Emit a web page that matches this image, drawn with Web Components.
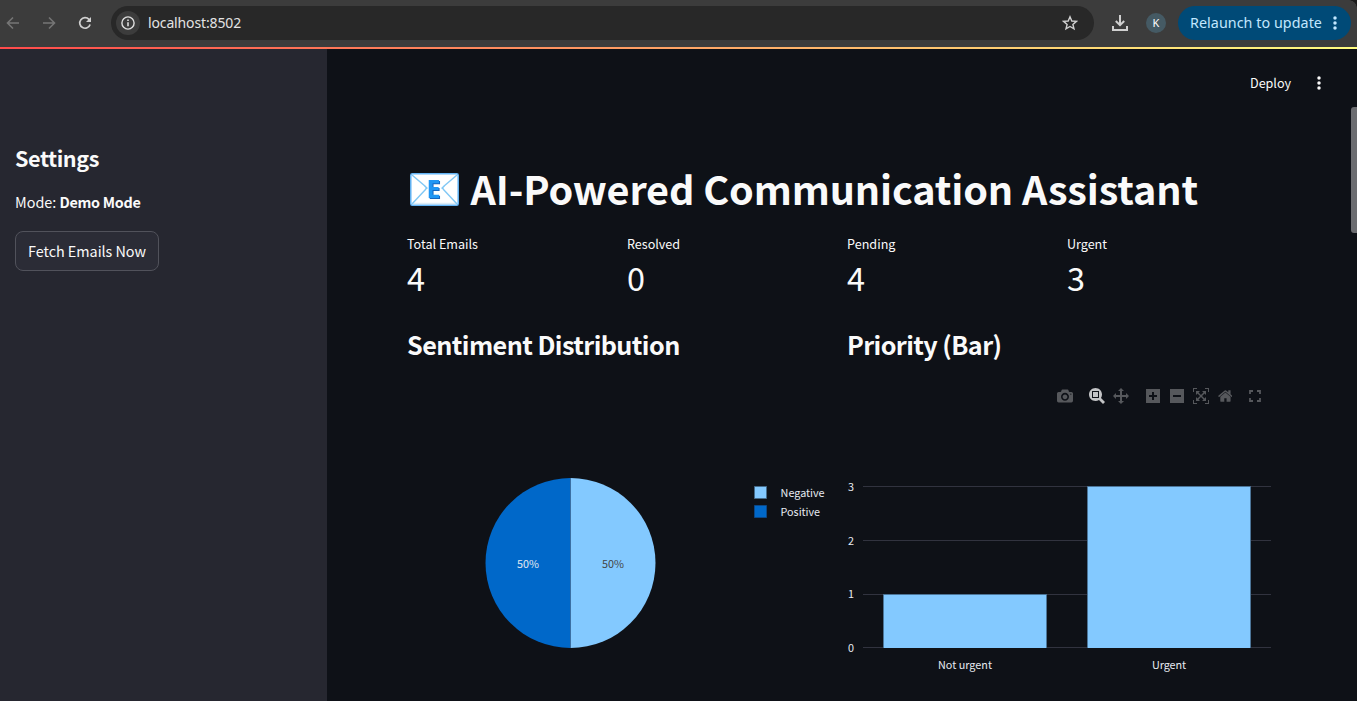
<!DOCTYPE html>
<html lang="en">
<head>
<meta charset="utf-8">
<title>AI-Powered Communication Assistant</title>
<style>
html,body{margin:0;height:100%;overflow:hidden;background:#0e1117}
body{font-family:"Noto Sans CJK SC","Noto Sans",sans-serif;color:#fafafa}
</style>
</head>
<body>
<mail-dashboard></mail-dashboard>
<script>
const define = (name, markup, setup) => customElements.define(name, class extends HTMLElement {
  connectedCallback() {
    if (this.shadowRoot) return;
    const t = document.createElement('template');
    t.innerHTML = typeof markup === 'function' ? markup(this) : markup;
    this.attachShadow({mode: 'open'}).append(t.content.cloneNode(true));
    if (setup) setup(this);
  }
});

/* Text run whose tracking is adjusted to a given advance width */
define('fit-text', `<style>:host{display:inline-block;white-space:pre}</style><span><slot></slot></span>`, el => {
  const w = +el.getAttribute('width');
  const n = el.textContent.length;
  const natural = el.shadowRoot.querySelector('span').getBoundingClientRect().width;
  el.style.letterSpacing = ((w - natural) / n).toFixed(3) + 'px';
});

const dots = (c, s) => `<svg width="6" height="16" viewBox="0 0 6 16" fill="${c}"><circle cx="3" cy="${8 - s}" r="1.75"/><circle cx="3" cy="8" r="1.75"/><circle cx="3" cy="${8 + s}" r="1.75"/></svg>`;

define('browser-bar', `<style>
:host{display:flex;align-items:center;box-sizing:border-box;height:47px;padding:0 6px 1px 0;background:#3c3c3c;font-family:"Noto Sans",sans-serif;color:#e3e3e3}
svg{display:block;flex:none}
fit-text{padding-bottom:2px}
.nav{display:flex;gap:20px;width:111px;padding-left:5px;box-sizing:border-box}
.url{flex:none;width:983px;height:34px;border-radius:17px;background:#282828;display:flex;align-items:center;box-sizing:border-box;padding:0 16px 0 5px;font-size:14px}
.info{width:24px;height:24px;border-radius:50%;background:#3c3c3c;display:grid;place-items:center;margin-right:8px}
.star{margin-left:auto}
.tail{display:flex;align-items:center;margin-left:auto}
.av{box-sizing:border-box;width:20px;height:20px;border-radius:50%;background:#455a64;color:#fff;font-size:11px;line-height:20px;text-align:center;margin:0 12px 0 18px}
.upd{display:flex;align-items:center;box-sizing:border-box;width:173px;height:34px;border-radius:17px;background:#004a77;color:#c2e7ff;font-size:14.3px;padding-left:12px;gap:10px}
</style>
<div class="nav">
<svg width="16" height="16" fill="none" stroke="#757575" stroke-width="1.6"><path d="M14 8H3M8 2.5 2.5 8 8 13.500"/></svg>
<svg width="16" height="16" fill="none" stroke="#757575" stroke-width="1.6"><path d="M2 8h11M8 2.500 13.500 8 8 13.500"/></svg>
<svg width="16" height="16" fill="none" stroke="#d0d0d0" stroke-width="1.7"><path d="M13.100 9.500A5.300 5.300 0 1 1 12 4.400L13 5.500"/><path d="M14 2v5H9z" fill="#d0d0d0" stroke="none"/></svg>
</div>
<div class="url"><span class="info"><svg width="14" height="14" fill="none" stroke="#dedede" stroke-width="1.4"><circle cx="7" cy="7" r="6.100"/><path d="M7 6.200v4M7 3.600v1.500" stroke-width="1.600"/></svg></span><fit-text width="93">localhost:8502</fit-text>
<svg class="star" width="16" height="16" viewBox="0 0 16 16" fill="none" stroke="#d0d0d0" stroke-width="1.400"><path d="m8 1.800 1.800 4.200 4.600.4-3.500 3 1.100 4.500L8 11.500l-4 2.400 1.100-4.500-3.500-3 4.600-.4z"/></svg></div>
<div class="tail"><svg width="16" height="18" fill="none" stroke="#d0d0d0" stroke-width="2"><path d="M8 1v10M3.800 7 8 11.200 12.200 7M1 12v4h14v-4"/></svg><span class="av">K</span>
<div class="upd"><fit-text width="132">Relaunch to update</fit-text>${dots('#c2e7ff', 5)}</div></div>`);

define('app-sidebar', `<style>
:host{display:block;box-sizing:border-box;width:327px;height:100%;background:#262730;padding:91px 15px 0}
h2{margin:0;font-size:21.6px;font-weight:600;line-height:36px;height:36px}
p{margin:15px 0 0;font-size:14.4px;line-height:22px;height:22px}
button{display:flex;align-items:center;justify-content:center;margin:18px 0 0;width:144px;height:40px;box-sizing:border-box;padding:0 0 1px;border:1px solid #51525b;border-radius:8px;background:#2b2c36;color:#fafafa;font:14.4px "Noto Sans CJK SC",sans-serif}
</style>
<h2><fit-text width="84">Settings</fit-text></h2>
<p><fit-text width="44.500">Mode: </fit-text><fit-text width="81" style="font-weight:600">Demo Mode</fit-text></p>
<button><fit-text width="118">Fetch Emails Now</fit-text></button>`);

define('app-header', `<style>
:host{display:flex;justify-content:flex-end;align-items:center;box-sizing:border-box;height:60px;padding:8px 35px 0 0;gap:25px;font-size:12.6px;line-height:20px}
svg{display:block}</style>
<fit-text width="41">Deploy</fit-text>${dots('#fafafa', 5)}`);

define('metric-card', el => `<style>
:host{display:block}
.l{font-size:12.6px;line-height:20px;height:20px}
.v{font-size:32.4px;line-height:46px;height:46px}</style>
<div class="l"><fit-text width="${el.getAttribute('w')}">${el.getAttribute('label')}</fit-text></div>
<div class="v"><slot></slot></div>`);

define('email-emoji', `<style>:host{display:block;width:49px;height:33px}svg{display:block}
text{font:700 25px "Noto Sans",sans-serif;fill:#2196f3;filter:drop-shadow(1px 1px 0 #1565c0)}</style>
<svg width="49" height="33"><rect x=".8" y=".8" width="47.400" height="31.400" rx="1.500" fill="#fff" stroke="#64b5f6" stroke-width="1.500"/>
<path d="M2.500 30.300h44" stroke="#d5e8f5"/>
<path d="M2 2 15.500 13.500Q17 15 15.500 16.500L2 31M47 2 33.500 13.500Q32 15 33.500 16.500L47 31M14.500 13l3 2.500M34.500 13l-3 2.500" fill="none" stroke="#81c8f5" stroke-width="1.400"/>
<text x="16.500" y="24.500">E</text></svg>`);

define('mode-bar', () => {
  const icon = (d, w = 1000, c = '') => `<i class="${c}"><svg width="${16 * w / 1000}" height="16" viewBox="0 0 ${w} 1000"><path transform="matrix(1 0 0 -1 0 850)" d="${d}"/></svg></i>`;
  return `<style>:host{display:flex;justify-content:flex-end;padding-right:4px;height:24px}
i{width:24px;height:24px;display:grid;place-items:center;fill:#56585c}.g{margin-left:8px}.on{fill:#c3c4c6}.f{margin-left:6px}svg{display:block}</style>`
  + icon('m500 450c-83 0-150-67-150-150 0-83 67-150 150-150 83 0 150 67 150 150 0 83-67 150-150 150z m400 150h-120c-16 0-34 13-39 29l-31 93c-6 15-23 28-40 28h-340c-16 0-34-13-39-28l-31-94c-6-15-23-28-40-28h-120c-55 0-100-45-100-100v-450c0-55 45-100 100-100h800c55 0 100 45 100 100v450c0 55-45 100-100 100z m-400-550c-138 0-250 112-250 250 0 138 112 250 250 250 138 0 250-112 250-250 0-138-112-250-250-250z m365 380c-19 0-35 16-35 35 0 19 16 35 35 35 19 0 35-16 35-35 0-19-16-35-35-35z')
  + icon('m1000-25l-250 251c40 63 63 138 63 218 0 224-182 406-407 406-224 0-406-182-406-406s183-406 407-406c80 0 155 22 218 62l250-250 125 125z m-812 250l0 438 437 0 0-438-437 0z m62 375l313 0 0-312-313 0 0 312z', 1000, 'g on')
  + icon('m1000 350l-187 188 0-125-250 0 0 250 125 0-188 187-187-187 125 0 0-250-250 0 0 125-188-188 186-187 0 125 252 0 0-250-125 0 187-188 188 188-125 0 0 250 250 0 0-126 187 188z')
  + icon('m1 787l0-875 875 0 0 875-875 0z m687-500l-187 0 0-187-125 0 0 187-188 0 0 125 188 0 0 187 125 0 0-187 187 0 0-125z', 875, 'g')
  + icon('m0 788l0-876 875 0 0 876-875 0z m688-500l-500 0 0 125 500 0 0-125z', 875)
  + icon('m250 850l-187 0-63 0 0-62 0-188 63 0 0 188 187 0 0 62z m688 0l-188 0 0-62 188 0 0-188 62 0 0 188 0 62-62 0z m-875-938l0 188-63 0 0-188 0-62 63 0 187 0 0 62-187 0z m875 188l0-188-188 0 0-62 188 0 62 0 0 62 0 188-62 0z m-125 188l-1 0-93-94-156 156 156 156 92-93 2 0 0 250-250 0 0-2 93-92-156-156-156 156 94 92 0 2-250 0 0-250 0 0 93 93 157-156-157-156-93 94 0 0 0-250 250 0 0 0-94 93 156 157 156-157-93-93 0 0 250 0 0 250z')
  + icon('m786 296v-267q0-15-11-26t-25-10h-214v214h-143v-214h-214q-15 0-25 10t-11 26v267q0 1 0 2t0 2l321 264 321-264q1-1 1-4z m124 39l-34-41q-5-5-12-6h-2q-7 0-12 3l-386 322-386-322q-7-4-13-4-7 2-12 7l-35 41q-4 5-3 13t6 12l401 334q18 15 42 15t43-15l136-114v109q0 8 5 13t13 5h107q8 0 13-5t5-13v-227l122-102q5-5 6-12t-4-13z', 928.6)
  + `<i class="f"><svg width="12" height="12" fill="none" stroke="#56585c" stroke-width="1.800"><path d="M1 4V1h3M8 1h3v3M11 8v3H8M4 11H1V8"/></svg></i>`;
});

const chartCss = `<style>:host{display:block}svg{display:block;overflow:visible}text{font-size:10.8px;fill:#e6eaf1}</style>`;

/* Both charts share a 424x293 canvas */
define('pie-chart', chartCss + `<svg width="424" height="293">
<g transform="translate(163.500 155)"><path d="M0-85A85 85 0 0 1 0 85z" fill="#83c9ff"/><path d="M0-85A85 85 0 0 0 0 85z" fill="#0068c9"/><path d="M0-85V85" stroke="#3b6fa3"/></g>
<text x="110" y="160" textLength="22">50%</text><text x="195" y="160" textLength="22" style="fill:#444">50%</text>
<g stroke="#456b8a"><path d="M347.500 78.500h12v12h-12z" fill="#83c9ff"/><path d="M347.500 97.500h12v12h-12z" fill="#0068c9" stroke="#0b4786"/></g>
<text x="373.600" y="89" textLength="44">Negative</text><text x="373.600" y="108" textLength="39.500">Positive</text></svg>`);

define('bar-chart', chartCss + `<svg width="424" height="293">
<path d="M16 78.500h408M16 132.500h408M16 186.500h408M16 239.500h408" stroke="#31333f"/>
<g fill="#83c9ff" stroke="#4c7598"><path d="M36.500 240V186.500h163V240"/><path d="M240.500 240V78.500h163V240"/></g>
<text x="1" y="83">3</text><text x="1" y="137">2</text><text x="1" y="190">1</text><text x="1" y="244">0</text>
<text x="91" y="261" textLength="54">Not urgent</text><text x="305" y="261" textLength="34">Urgent</text></svg>`);

define('chart-panel', `<style>:host{display:block}
h3{margin:0;font-size:25.2px;font-weight:600;line-height:34px;height:34px}
.tools{height:24px;margin-top:23px}</style>
<h3><slot name="title"></slot></h3><div class="tools"><slot name="tools"></slot></div><slot></slot>`);

define('mail-dashboard', `<style>
:host{display:flex;flex-direction:column;height:701px;width:1357px;overflow:hidden;position:relative}
.line{flex:none;height:2px;background:linear-gradient(to right,#ff4b4b,#fffd80)}
.body{display:flex;flex:1;min-height:0}
main{flex:1;min-width:0}
.content{padding:52px 0 0 80px;width:864px}
h1{margin:0;display:flex;align-items:center;height:53px;line-height:53px;font-size:39.6px;font-weight:700}
email-emoji{margin:4px 11.500px 0 3px}
.metrics{display:grid;grid-template-columns:repeat(4,1fr);gap:16px;margin-top:20px}
.charts{display:grid;grid-template-columns:1fr 1fr;gap:16px;margin-top:27px}
.scroll{position:absolute;right:0;top:107px;width:6px;height:126px;border-radius:3px 0 0 3px;background:#6b6c70}
.corner{position:absolute;right:0;top:0;width:8px;height:8px;background:radial-gradient(circle at 0 100%,transparent 7.500px,#1c1c1c 8px)}
</style>
<browser-bar></browser-bar><div class="line"></div>
<div class="body"><app-sidebar></app-sidebar>
<main><app-header></app-header><div class="content">
<h1><email-emoji></email-emoji><fit-text width="727.500">AI-Powered Communication Assistant</fit-text></h1>
<div class="metrics"><metric-card label="Total Emails" w="71">4</metric-card><metric-card label="Resolved" w="53">0</metric-card><metric-card label="Pending" w="48.500">4</metric-card><metric-card label="Urgent" w="40">3</metric-card></div>
<div class="charts">
<chart-panel><fit-text slot="title" width="272.700">Sentiment Distribution</fit-text><pie-chart></pie-chart></chart-panel>
<chart-panel><fit-text slot="title" width="154.500">Priority (Bar)</fit-text><mode-bar slot="tools"></mode-bar><bar-chart></bar-chart></chart-panel>
</div></div></main></div>
<div class="scroll"></div><div class="corner"></div>`);
</script>
</body>
</html>
